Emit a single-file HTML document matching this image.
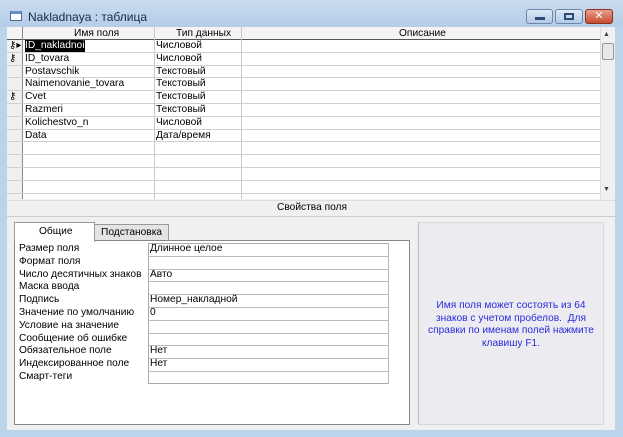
<!DOCTYPE html>
<html><head><meta charset="utf-8"><style>
*{margin:0;padding:0;box-sizing:border-box}
body{width:623px;height:437px;overflow:hidden;background:#bcd3ec;font-family:"Liberation Sans","DejaVu Sans",sans-serif;font-size:10.2px;color:#000;position:relative}
.a{position:absolute}
.title{left:0;top:0;width:623px;height:27px;background:linear-gradient(#c9dbef,#b6cde8)}
.btn{top:9px;height:15px;border:1px solid #6e87a8;border-radius:3px;background:linear-gradient(#dde9f6,#b3c9e4)}
.row{position:absolute;left:0;height:12.8px;border-bottom:1px solid #d0d0d0;width:593px}
.t{position:absolute;white-space:nowrap;line-height:12px}
</style></head><body>
<div class="a title"></div>
<div class="a" style="left:10px;top:11px;width:12px;height:10px;border:1px solid #4a6e9a;background:#fff;border-top:3px solid #6a8fc0"></div>
<div class="a" style="left:28px;top:10px;font-size:12px;color:#1a2a44">Nakladnaya : таблица</div>
<div class="a btn" style="left:526px;width:27px"><div class="a" style="left:8px;top:7px;width:10px;height:3px;background:#2b4a74"></div></div>
<div class="a btn" style="left:555px;width:28px"><div class="a" style="left:8px;top:3px;width:10px;height:7px;border:2px solid #2b4a74"></div></div>
<div class="a btn" style="left:585px;width:28px;background:linear-gradient(#e8a08c,#c84a2e);border-color:#8a3020;color:#fff;font-weight:bold;text-align:center;font-size:11px;line-height:13px">✕</div>

<div class="a" style="left:7px;top:27px;width:608px;height:172px;background:#fff;overflow:hidden">
 <div class="a" style="left:0;top:0;width:593px;height:13px;background:#f4f4f4;border-bottom:1px solid #555"></div>
 <div class="t" style="left:67px;top:1px">Имя поля</div>
 <div class="t" style="left:169px;top:1px">Тип данных</div>
 <div class="t" style="left:392px;top:1px">Описание</div>
 <div class="a" style="left:15px;top:0;width:1px;height:172px;background:#888"></div>
 <div class="a" style="left:147px;top:0;width:1px;height:172px;background:#c8c8c8"></div>
 <div class="a" style="left:234px;top:0;width:1px;height:172px;background:#c8c8c8"></div>
 <div class="a" style="left:593px;top:0;width:15px;height:172px;background:#f0f0f0;border-left:1px solid #ddd"></div>
 <div class="a" style="left:596px;top:4px;font-size:7px;color:#444">▲</div>
 <div class="a" style="left:595px;top:16px;width:12px;height:17px;border:1px solid #999;border-radius:2px;background:#e8e8e8"></div>
 <div class="a" style="left:596px;top:159px;font-size:7px;color:#444">▼</div>
 <div class="a" style="left:0;top:13px;width:15px;height:159px;background:#f0f0f0"></div>
 <div class="a" style="left:0;top:13px;width:593px">
  <div class="row" style="top:0"></div><div class="row" style="top:12.8px"></div><div class="row" style="top:25.6px"></div><div class="row" style="top:38.4px"></div><div class="row" style="top:51.2px"></div><div class="row" style="top:64px"></div><div class="row" style="top:76.8px"></div><div class="row" style="top:89.6px"></div><div class="row" style="top:102.4px"></div><div class="row" style="top:115.2px"></div><div class="row" style="top:128px"></div><div class="row" style="top:140.8px"></div>
  <div class="t" style="left:2px;top:0;font-size:10px">⚷▸</div>
  <div class="t" style="left:2px;top:12.8px;font-size:10px">⚷</div>
  <div class="t" style="left:2px;top:51.2px;font-size:10px">⚷</div>
  <div class="t" style="left:18px;top:0;color:#fff;background:#000;padding-right:1px">ID_nakladnoi</div><div class="t" style="left:149px;top:0">Числовой</div>
  <div class="t" style="left:18px;top:12.8px">ID_tovara</div><div class="t" style="left:149px;top:12.8px">Числовой</div>
  <div class="t" style="left:18px;top:25.6px">Postavschik</div><div class="t" style="left:149px;top:25.6px">Текстовый</div>
  <div class="t" style="left:18px;top:38.4px">Naimenovanie_tovara</div><div class="t" style="left:149px;top:38.4px">Текстовый</div>
  <div class="t" style="left:18px;top:51.2px">Cvet</div><div class="t" style="left:149px;top:51.2px">Текстовый</div>
  <div class="t" style="left:18px;top:64px">Razmeri</div><div class="t" style="left:149px;top:64px">Текстовый</div>
  <div class="t" style="left:18px;top:76.8px">Kolichestvo_n</div><div class="t" style="left:149px;top:76.8px">Числовой</div>
  <div class="t" style="left:18px;top:89.6px">Data</div><div class="t" style="left:149px;top:89.6px">Дата/время</div>
 </div>
</div>

<div class="a" style="left:7px;top:199px;width:608px;height:231px;background:#f0f0f0"></div>
<div class="a" style="left:7px;top:200px;width:608px;border-top:1px solid #ddd"></div>
<div class="t" style="left:277px;top:202px">Свойства поля</div>
<div class="a" style="left:7px;top:216px;width:608px;border-top:1px solid #ccc"></div>

<div class="a" style="left:94px;top:224px;width:75px;height:17px;border:1px solid #999;background:#e4e4e4"></div>
<div class="t" style="left:101px;top:227px">Подстановка</div>
<div class="a" style="left:14px;top:240px;width:396px;height:185px;border:1px solid #888;background:#fff"></div>
<div class="a" style="left:14px;top:222px;width:81px;height:20px;border:1px solid #999;border-bottom:none;background:#fff"></div>
<div class="t" style="left:39px;top:226px">Общие</div>

<div class="a" style="left:148px;top:243px;width:241px;height:141px;border:1px solid #aaa;border-right:1px solid #bbb">
 <div style="height:12.8px;border-bottom:1px solid #bbb"></div><div style="height:12.8px;border-bottom:1px solid #bbb"></div><div style="height:12.8px;border-bottom:1px solid #bbb"></div><div style="height:12.8px;border-bottom:1px solid #bbb"></div><div style="height:12.8px;border-bottom:1px solid #bbb"></div><div style="height:12.8px;border-bottom:1px solid #bbb"></div><div style="height:12.8px;border-bottom:1px solid #bbb"></div><div style="height:12.8px;border-bottom:1px solid #bbb"></div><div style="height:12.8px;border-bottom:1px solid #bbb"></div><div style="height:12.8px;border-bottom:1px solid #bbb"></div>
</div>
<div class="a" style="left:19px;top:243px;line-height:12.8px">Размер поля<br>Формат поля<br>Число десятичных знаков<br>Маска ввода<br>Подпись<br>Значение по умолчанию<br>Условие на значение<br>Сообщение об ошибке<br>Обязательное поле<br>Индексированное поле<br>Смарт-теги</div>
<div class="a" style="left:150px;top:243px;line-height:12.8px">Длинное целое<br><br>Авто<br><br>Номер_накладной<br>0<br><br><br>Нет<br>Нет</div>

<div class="a" style="left:418px;top:222px;width:186px;height:203px;background:#ececf0;border:1px solid #d8d8d8;border-left:1px solid #bbb"></div>
<div class="a" style="left:418px;top:300px;width:186px;text-align:center;color:#2a2ae0;line-height:12.5px;font-size:10.2px">Имя поля может состоять из 64<br>знаков с учетом пробелов.&nbsp; Для<br>справки по именам полей нажмите<br>клавишу F1.</div>
</body></html>
